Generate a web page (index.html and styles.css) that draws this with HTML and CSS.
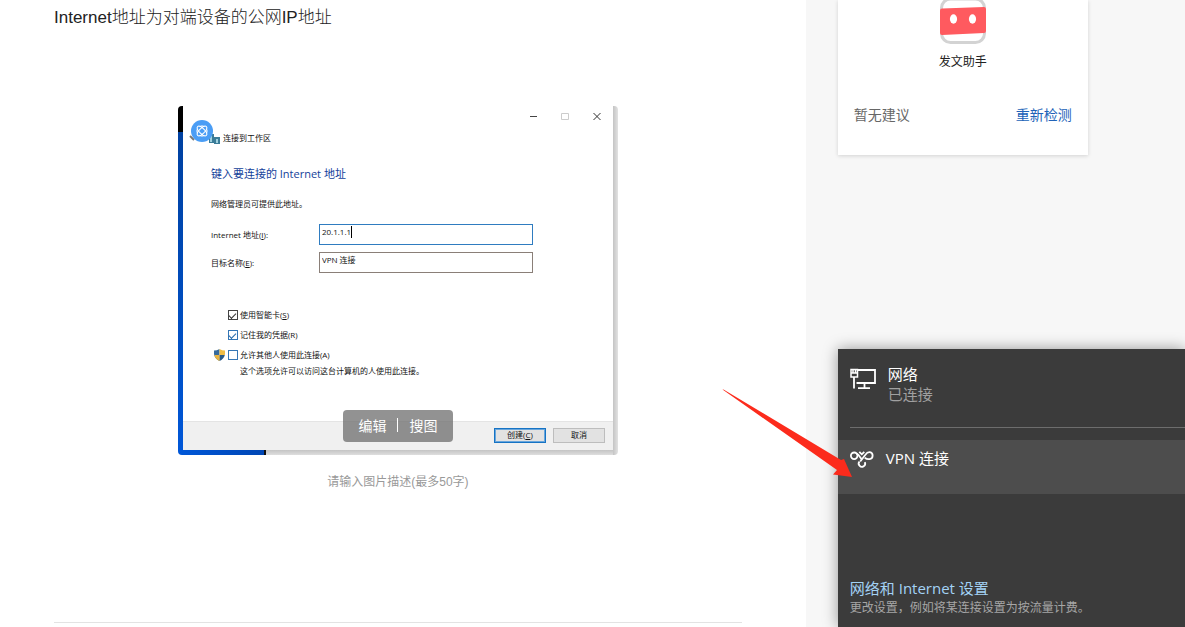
FILE: index.html
```html
<!DOCTYPE html>
<html lang="zh-CN">
<head>
<meta charset="utf-8">
<title>Internet地址</title>
<link rel="stylesheet" href="styles.css">
</head>
<body>
<main class="editor">
  <p class="editor-text">Internet地址为对端设备的公网IP地址</p>
  <figure class="figure">
    <div class="shot">
      <section class="dialog">
        <header class="dialog-head">
          <svg class="dialog-icon" width="32" height="26" viewBox="0 0 32 26" aria-hidden="true">
            <path d="M1 17l4 4" stroke="#777" stroke-width="2"/>
            <path d="M20 15h5v9h-5zM25 18h6v7h-6z" fill="#3b7c98"/>
            <path d="M21 17h2v6h-2zM27 20h2v4h-2z" fill="#9fd0de"/>
            <circle cx="13" cy="12" r="11" fill="#4a9df5"/>
            <g fill="none" stroke="#fff" stroke-width="1">
              <ellipse cx="13" cy="12" rx="2.600" ry="6.200" transform="rotate(45 13 12)"/>
              <ellipse cx="13" cy="12" rx="2.600" ry="6.200" transform="rotate(-45 13 12)"/>
              <path d="M10.500 7.500q2.500-1.200 5 0M10.500 16.500q2.500 1.200 5 0M8.500 9.500q-1.200 2.500 0 5M17.500 9.500q1.200 2.500 0 5"/>
            </g>
          </svg>
          <span class="dialog-name">连接到工作区</span>
          <div class="win-controls">
            <button class="win-btn" aria-label="最小化"><svg width="10" height="10" viewBox="0 0 10 10"><path d="M2 5.500h7" stroke="#444"/></svg></button>
            <button class="win-btn" aria-label="最大化"><svg width="10" height="10" viewBox="0 0 10 10"><path d="M1.500 2.500h7v6h-7z" fill="none" stroke="#ccc"/></svg></button>
            <button class="win-btn" aria-label="关闭"><svg width="10" height="10" viewBox="0 0 10 10"><path d="M1.500 2l7 7m0-7l-7 7" stroke="#333" stroke-width="1"/></svg></button>
          </div>
        </header>
        <div class="dialog-body">
          <h2 class="dialog-title">键入要连接的 Internet 地址</h2>
          <p class="dialog-note">网络管理员可提供此地址。</p>
          <div class="fields">
            <label for="addr">Internet 地址(<u>I</u>):</label>
            <div class="field field-active"><input id="addr" type="text" value="20.1.1.1" size="1"></div>
            <label for="dest">目标名称(<u>E</u>):</label>
            <div class="field"><input id="dest" type="text" value="VPN 连接"></div>
          </div>
          <div class="checks">
            <label class="check"><input type="checkbox" checked><span>使用智能卡(<u>S</u>)</span></label>
            <label class="check check-blue"><input type="checkbox" checked><span>记住我的凭据(R)</span></label>
            <div class="check-row">
              <svg class="shield" width="11" height="12" viewBox="0 0 11 12" aria-hidden="true">
                <path d="M5.500 0Q3 1.600 0 1.600V5Q.5 9.500 5.500 12z" fill="#356a9c"/>
                <path d="M5.500 0Q8 1.600 11 1.600V5q0 .5-.2 1H5.500z" fill="#f0bd45"/>
                <path d="M5.500 6h5.300Q9.800 10 5.500 12z" fill="#285a89"/>
                <path d="M.3 6h5.200v6Q1.300 10 .3 6z" fill="#e9b43f"/>
              </svg>
              <label class="check check-blue"><input type="checkbox"><span>允许其他人使用此连接(A)</span></label>
            </div>
            <p class="check-note">这个选项允许可以访问这台计算机的人使用此连接。</p>
          </div>
        </div>
        <footer class="dialog-foot">
          <button class="dlg-btn dlg-primary">创建(<u>C</u>)</button>
          <button class="dlg-btn">取消</button>
        </footer>
      </section>
      <div class="image-tools">
        <button class="tool">编辑</button>
        <span class="tool-sep"></span>
        <button class="tool">搜图</button>
      </div>
    </div>
    <figcaption class="caption">请输入图片描述(最多50字)</figcaption>
  </figure>
  <hr class="rule">
</main>

<aside class="side">
  <section class="card">
    <svg class="robot" width="46" height="44" viewBox="0 0 46 44" aria-hidden="true">
      <rect x="1.500" y="-1" width="43" height="43.500" rx="9" fill="#fff" stroke="#d3d3d3" stroke-width="3"/>
      <path d="M2 8.500L44 7q2 0 2 2v22q0 2-2 2L2 35q-2 0-2-2V10.500q0-2 2-2z" fill="#ff5a5f"/>
      <ellipse cx="13.500" cy="19" rx="3.600" ry="4.700" fill="#fff"/>
      <ellipse cx="32.500" cy="19" rx="3.600" ry="4.700" fill="#fff"/>
    </svg>
    <p class="card-name">发文助手</p>
    <div class="card-row">
      <span class="muted">暂无建议</span>
      <a class="recheck" href="#">重新检测</a>
    </div>
  </section>

  <section class="net">
    <div class="net-item">
      <svg class="net-icon" width="26" height="22" viewBox="0 0 26 22" fill="none" stroke="#fff" stroke-width="1.800" aria-hidden="true">
        <path d="M8 2h17v13H6.500"/>
        <path d="M14.500 15v5M8 20.100h12M4 9v11.500"/>
        <path d="M1 1.500h6.500V9H1zM3 2v2.500M5.500 2v2.500M1 5h6.500" stroke-width="1.500"/>
      </svg>
      <div class="net-label"><span>网络</span><span class="net-status">已连接</span></div>
    </div>
    <hr class="net-rule">
    <button class="vpn">
      <svg class="vpn-icon" width="24" height="19" viewBox="0 0 24 19" fill="none" stroke="#fff" stroke-width="1.800" aria-hidden="true">
        <circle cx="4.200" cy="5.800" r="3.300"/>
        <path d="M6.500 3.500Q8.500 4.500 10.200 7.200L11.800 9.500"/>
        <path d="M9.300 1.800l2.500 2.500 2.500-2.500"/>
        <path d="M14.800 7.800Q17 9.600 19.600 9.100A3.500 3.500 0 0 0 19.800 2.200Q17.300 2 15.200 5L10.200 11.500"/>
        <path d="M9.500 11.500A3.200 3.200 0 1 0 14.800 12.200"/>
      </svg>
      <span>VPN 连接</span>
    </button>
    <div class="net-foot">
      <a class="net-link" href="#">网络和 Internet 设置</a>
      <p class="net-desc">更改设置，例如将某连接设置为按流量计费。</p>
    </div>
  </section>

  <svg class="arrow" width="131" height="90" viewBox="0 0 131 90" aria-hidden="true">
    <path d="M.5 .5Q2 0 4 2L119 71 122 70 130 88 111 85.500 115 81z" fill="#fc2b1c"/>
  </svg>
</aside>
</body>
</html>
```
FILE: styles.css
```css
* {
  box-sizing: border-box;
}

body {
  margin: 0;
  min-height: 100vh;
  display: flex;
  background: #fff;
  color: #222;
  font-family: "Liberation Sans", "Noto Sans CJK SC", sans-serif;
}

p,
h2,
figure,
hr {
  margin: 0;
}

button {
  font: inherit;
  color: inherit;
  border: 0;
  padding: 0;
  background: none;
}

a {
  text-decoration: none;
}

/* Editor column */
.editor {
  flex: 1;
  min-width: 0;
  padding: 6px 64px 0 54px;
}

.editor-text {
  font-size: 17px;
  line-height: 24px;
  font-weight: 300;
}

.figure {
  display: flex;
  flex-direction: column;
  align-items: center;
  margin-top: 76px;
}

.shot {
  position: relative;
  width: 440px;
  max-width: 100%;
  padding: 0 5px 5px;
  border-radius: 4px;
  overflow: hidden;
  background:
    linear-gradient(#000, #000) 0 0 / 5px 26px no-repeat,
    linear-gradient(90deg, #0057d8, #0046b4 86px, #111 86px) 0 100% / 88px 5px no-repeat,
    linear-gradient(#003f9c, #0057d8) 0 0 / 5px 100% no-repeat,
    linear-gradient(90deg, #c4c4c4, #e2e2e2) 100% 0 / 5px 100% no-repeat,
    linear-gradient(#c4c4c4, #dedede) 0 100% / 100% 5px no-repeat;
}

.caption {
  margin-top: 17px;
  font-size: 12px;
  line-height: 20px;
  color: #999;
}

.rule {
  margin-top: 130px;
  border: 0;
  border-top: 1px solid #e3e3e3;
}

/* Connection dialog */
.dialog {
  background: #fff;
  color: #111;
  font-family: "Open Sans", "Noto Sans CJK SC", sans-serif;
  font-size: 8px;
  line-height: 12px;
}

.dialog-head {
  display: flex;
  align-items: flex-start;
  height: 42px;
  padding-left: 6px;
}

.dialog-icon {
  margin-top: 13px;
}

.dialog-name {
  margin: 26px auto 0 2px;
}

.win-controls {
  display: flex;
}

.win-btn {
  display: grid;
  place-items: center;
  width: 32px;
  height: 20px;
}

.dialog-body {
  padding: 18px 28px 44px;
}

.dialog-title {
  font-size: 11px;
  line-height: 16px;
  font-weight: 400;
  color: #13419a;
}

.dialog-note {
  margin-top: 16px;
}

.fields {
  display: grid;
  grid-template-columns: 108px 214px;
  row-gap: 7px;
  align-items: center;
  margin-top: 14px;
}

.field {
  height: 21px;
  display: flex;
  align-items: flex-start;
  padding: 1px 2px;
  border: 1px solid #8a7f78;
}

.field-active {
  border-color: #2f7cc0;
}

.field input {
  width: 100%;
  padding: 0;
  border: 0;
  outline: 0;
  background: none;
  font: inherit;
  color: inherit;
}

.field-active input {
  width: auto;
  field-sizing: content;
  border-right: 1px solid #000;
}

.checks {
  display: flex;
  flex-direction: column;
  padding-left: 17px;
  margin-top: 32px;
}

.check {
  display: flex;
  align-items: center;
  gap: 2px;
  height: 20px;
}

.check input {
  appearance: none;
  flex: none;
  display: grid;
  place-items: center;
  width: 10px;
  height: 10px;
  margin: 0;
  border: 1px solid #444;
}

.check-blue input {
  border-color: #3576b5;
}

.check input:checked::before {
  content: "";
  width: 6px;
  height: 3px;
  border: solid #333;
  border-width: 0 0 1px 1px;
  transform: rotate(-45deg);
}

.check-blue input:checked::before {
  border-color: #2367a8;
}

.check-row {
  display: flex;
  align-items: center;
  gap: 3px;
  margin-left: -14px;
}

.check-note {
  padding-left: 12px;
}

.dialog-foot {
  display: flex;
  justify-content: flex-end;
  align-items: center;
  gap: 7px;
  height: 29px;
  padding: 0 8px 2px;
  background: #f0f0f0;
  border-top: 1px solid #e4e4e4;
}

.dlg-btn {
  width: 52px;
  height: 15px;
  border: 1px solid #bdbdbd;
  background: #e2e2e2;
}

.dlg-primary {
  border-color: #1673c4;
  box-shadow: inset 0 0 0 1px #69a6dc;
}

/* Toolbar floating over the image */
.image-tools {
  position: absolute;
  left: 50%;
  bottom: 13px;
  transform: translateX(-50%);
  display: flex;
  align-items: center;
  justify-content: center;
  gap: 11px;
  width: 110px;
  height: 32px;
  padding-bottom: 2px;
  border-radius: 4px;
  background: rgba(110, 110, 110, 0.75);
  color: #fff;
  font-size: 14px;
}

.tool-sep {
  width: 1px;
  height: 14px;
  background: #fff;
}

/* Side column */
.side {
  position: relative;
  flex: 0 0 32%;
  padding-left: 32px;
  background: #f7f7f7;
}

.card {
  display: flex;
  flex-direction: column;
  align-items: center;
  width: 250px;
  padding: 0 16px 30px;
  background: #fff;
  box-shadow: 0 1px 4px rgba(0, 0, 0, 0.15);
}

.card-name {
  margin-top: 8px;
  font-size: 12px;
  line-height: 20px;
}

.card-row {
  align-self: stretch;
  display: flex;
  justify-content: space-between;
  margin-top: 33px;
  font-size: 14px;
  line-height: 20px;
}

.muted {
  color: #666;
}

.recheck {
  color: #2163b8;
}

/* Network flyout */
.net {
  position: absolute;
  left: 32px;
  right: 0;
  bottom: 0;
  background: #3b3b3b;
  color: #fff;
  box-shadow: 0 0 14px rgba(0, 0, 0, 0.4);
  font-family: "Open Sans", "Noto Sans CJK SC", sans-serif;
  font-size: 15px;
  line-height: 20px;
}

.net-item {
  display: flex;
  align-items: flex-start;
  gap: 12px;
  padding: 15px 12px 23px;
}

.net-icon {
  margin-top: 4px;
}

.net-label {
  display: flex;
  flex-direction: column;
}

.net-status {
  color: #a0a0a0;
}

.net-rule {
  margin-left: 12px;
  border: 0;
  border-top: 1px solid #6d6d6d;
}

.vpn {
  display: flex;
  align-items: flex-start;
  gap: 12px;
  width: 100%;
  height: 54px;
  margin-top: 12px;
  padding: 8px 12px;
  background: #4d4d4d;
  text-align: left;
}

.vpn-icon {
  margin-top: 2px;
}

.net-foot {
  padding: 84px 12px 9px;
}

.net-link {
  display: block;
  color: #a3d2f5;
}

.net-desc {
  font-size: 12px;
  line-height: 20px;
  color: #a6a6a6;
}

/* Pointer drawn over the flyout edge */
.arrow {
  position: absolute;
  left: -84px;
  bottom: 148px;
}
```
